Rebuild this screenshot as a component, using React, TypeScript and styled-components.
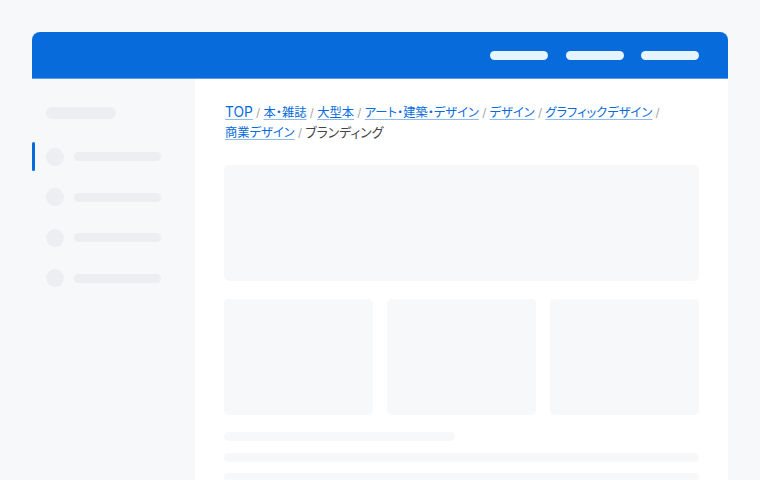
import React from "react";
import styled, { createGlobalStyle } from "styled-components";

const Global = createGlobalStyle`
  html, body { margin: 0; padding: 0; height: 480px; overflow: hidden; background: #f7f8fa; }
  #root { height: 480px; }
`;
const Page = styled.div`
  height: 480px;
  box-sizing: border-box;
  padding: 32px 32px 0;
  overflow: hidden;
`;
const Header = styled.header`
  height: 47px;
  box-sizing: border-box;
  background: #086bdc;
  border-radius: 8px 8px 0 0;
  display: flex;
  align-items: center;
  justify-content: flex-end;
  gap: 17.5px;
  padding: 1px 29px 0 0;
  border-bottom: 1px solid #5b9de8;
`;
const NavPill = styled.span`
  width: 58px;
  height: 9px;
  border-radius: 5px;
  background: #e6f4ff;
`;
const Body = styled.div`
  display: flex;
  height: 401px;
`;
const Sidebar = styled.aside`
  width: 163px;
  flex: none;
  padding-top: 28px;
  box-sizing: border-box;
`;
const SideTitle = styled.div`
  width: 70px;
  height: 12px;
  margin: 0 0 23px 14px;
  border-radius: 6px;
  background: #eceef2;
`;
const SideList = styled.div`
  display: flex;
  flex-direction: column;
  gap: 11.5px;
`;
const SideItem = styled.div<{ $active?: boolean }>`
  height: 29px;
  display: flex;
  align-items: center;
  gap: 10px;
  padding-left: 14px;
  position: relative;
  &::before {
    content: "";
    display: ${(p) => (p.$active ? "block" : "none")};
    position: absolute;
    left: 0;
    top: 0;
    width: 3px;
    height: 29px;
    border-radius: 2px;
    background: #086bdc;
  }
`;
const Dot = styled.span`
  width: 18px;
  height: 18px;
  border-radius: 50%;
  background: #eceef2;
  flex: none;
`;
const SideLine = styled.span`
  width: 87px;
  height: 9px;
  border-radius: 5px;
  background: #eceef2;
`;
const Main = styled.main`
  flex: 1;
  background: #fff;
  padding: 24px 29px 0 28.5px;
  box-sizing: border-box;
  overflow: hidden;
`;
const Crumbs = styled.nav`
  font-family: Inter, "Noto Sans CJK JP", sans-serif;
  font-size: 12.3px;
  line-height: 20px;
  color: #444;
  padding-left: 1.5px;
  font-feature-settings: "palt";
  margin-bottom: 22px;
`;
const CrumbLink = styled.a<{ $latin?: boolean }>`
  font-size: ${(p) => (p.$latin ? "13.8px" : "12.3px")};
  line-height: 1;
  white-space: nowrap;
  color: #086bdc;
  text-decoration: underline;
  text-decoration-color: #8fbcf0;
  text-underline-offset: 2px;
`;
const Sep = styled.span`
  color: #a3a3a3;
  font-size: 11.5px;
  line-height: 1;
`;
const Current = styled.span`
  font-size: 12.9px;
  line-height: 1;
  white-space: nowrap;
`;
const Hero = styled.div`
  height: 116px;
  border-radius: 5px;
  background: #f7f8fa;
`;
const Cards = styled.div`
  display: grid;
  grid-template-columns: repeat(3, 149px);
  justify-content: space-between;
  margin: 18px 0 17px;
`;
const Card = styled.div`
  height: 116px;
  border-radius: 5px;
  background: #f7f8fa;
`;
const Lines = styled.div`
  display: flex;
  flex-direction: column;
  gap: 11.5px;
`;
const Line = styled.div<{ $w?: string }>`
  width: ${(p) => p.$w ?? "100%"};
  height: 9px;
  border-radius: 5px;
  background: #f7f8fa;
`;

const links = ["TOP", "本・雑誌", "大型本", "アート・建築・デザイン", "デザイン", "グラフィックデザイン", "商業デザイン"];

export default function App() {
  return (
    <Page>
      <Global />
      <Header>
        <NavPill />
        <NavPill />
        <NavPill />
      </Header>
      <Body>
        <Sidebar>
          <SideTitle />
          <SideList>
            {[true, false, false, false].map((active, i) => (
              <SideItem key={i} $active={active}>
                <Dot />
                <SideLine />
              </SideItem>
            ))}
          </SideList>
        </Sidebar>
        <Main>
          <Crumbs>
            {links.map((l) => (
              <React.Fragment key={l}>
                <CrumbLink href="#" $latin={l === "TOP"}>{l}</CrumbLink>
                <Sep> / </Sep>
              </React.Fragment>
            ))}
            <Current>ブランディング</Current>
          </Crumbs>
          <Hero />
          <Cards>
            <Card />
            <Card />
            <Card />
          </Cards>
          <Lines>
            <Line $w="231px" />
            <Line />
            <Line />
          </Lines>
        </Main>
      </Body>
    </Page>
  );
}
